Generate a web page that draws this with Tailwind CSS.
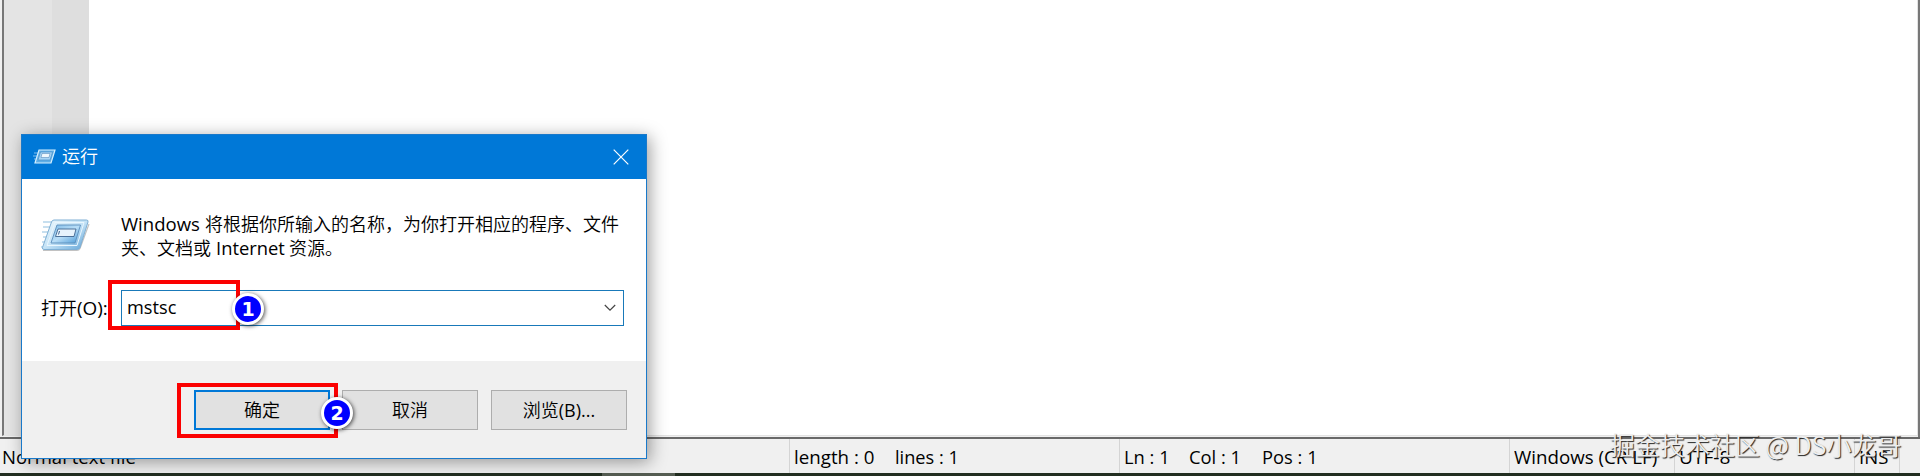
<!DOCTYPE html>
<html lang="zh-CN">
<head>
    <meta charset="UTF-8">
    <meta name="viewport" content="width=device-width, initial-scale=1.0">
    <title>运行</title>
    <script src="https://cdn.jsdelivr.net/npm/@tailwindcss/browser@4"></script>
</head>
<body class="relative w-[1920px] h-[476px] overflow-hidden bg-[#f0f0f0] text-black text-[18px] font-['Open_Sans','Noto_Sans_CJK_SC',sans-serif]">
    <!-- editor -->
    <div class="flex flex-col h-full">
        <div class="flex h-[439px] border-b-2 border-[#696969]">
            <div class="w-[2px] bg-[#f0f0f0]"></div>
            <div class="flex flex-1 border-l-2 border-b border-r border-l-[#777] border-b-[#e3e3e3] border-r-[#e3e3e3] mb-px">
                <div class="w-[48px] bg-[#e4e4e4]"></div>
                <div class="w-[37px] bg-[#dedede]"></div>
                <div class="flex-1 bg-white"></div>
            </div>
            <div class="w-[2px] bg-[#777]"></div>
        </div>
        <div class="flex h-[34px] leading-[37px] whitespace-pre">
            <div class="w-[790px] pl-[2px] border-r border-[#d4d4d4]"><span class="inline-block origin-left scale-x-[1.03]">Normal text file</span></div>
            <div class="flex w-[330px] pl-[4px] border-r border-[#d4d4d4]">
                <div class="w-[101px]"><span class="inline-block origin-left scale-x-[1.04]">length : 0</span></div>
                <div><span class="inline-block origin-left scale-x-[1.01]">lines : 1</span></div>
            </div>
            <div class="flex w-[390px] pl-[4px] border-r border-[#d4d4d4]">
                <div class="w-[65px]"><span class="inline-block origin-left scale-x-[1.02]">Ln : 1</span></div>
                <div class="w-[73px]"><span class="inline-block origin-left scale-x-[1.02]">Col : 1</span></div>
                <div><span class="inline-block origin-left scale-x-[1.02]">Pos : 1</span></div>
            </div>
            <div class="w-[165px] pl-[4px] border-r border-[#d4d4d4]"><span class="inline-block origin-left scale-x-[1.04]">Windows (CR LF)</span></div>
            <div class="w-[180px] pl-[4px] border-r border-[#d4d4d4]"><span class="inline-block origin-left scale-x-[1.06]">UTF-8</span></div>
            <div class="w-[45px] pl-[4px] border-r border-[#d4d4d4]"><span class="inline-block origin-left scale-x-[1.03]">INS</span></div>
        </div>
        <div class="flex h-[3px] bg-[#222e20]">
            <div class="ml-[602px] w-[73px] bg-[#555d52]"></div>
        </div>
    </div>

    <!-- run dialog -->
    <div class="absolute left-[21px] top-[134px] w-[626px] h-[325px] flex flex-col border border-[#1979ca] bg-white font-[350] shadow-[3px_3px_16px_rgba(0,0,0,0.38)]">
        <div class="flex items-center h-[44px] shrink-0 bg-[#0078d7] text-white">
            <svg class="ml-[11px] w-[24px] h-[16px]" viewBox="0 0 24 16" fill="none">
                <path d="M1 4h4M0 7h4M1 10h3" stroke="#9ed1f5" stroke-width=".8" />
                <path d="M6 1h16l-4 13H2z" fill="#5faee6" stroke="#d5efff" stroke-width="1.2" />
                <path d="M7.500 3h12l-2.400 8H5z" fill="#a8d5f5" stroke="#4a91c9" stroke-width=".7" />
                <path d="M9 4.500h8l-1 4H8z" fill="#eef7fd" stroke="#467fb2" stroke-width=".5" />
            </svg>
            <span class="ml-[5px] pb-[1px]">运行</span>
            <svg class="ml-auto mr-[17px] w-[16px] h-[16px]" viewBox="0 0 16 16" fill="none" stroke="#fff" stroke-width="1.2">
                <path d="M.7.7l14.600 14.600M15.300.7L.7 15.300" />
            </svg>
        </div>
        <div class="flex flex-col h-[182px] shrink-0">
            <div class="flex h-[111px]">
                <svg class="ml-[18px] mt-[40px] w-[50px] h-[33px]" viewBox="0 0 50 33" fill="none">
                    <defs>
                        <linearGradient id="frame" x1="0" y1="0" x2="1" y2="1">
                            <stop offset="0" stop-color="#eef8fd" />
                            <stop offset=".5" stop-color="#c3e2f6" />
                            <stop offset="1" stop-color="#5fa3d7" />
                        </linearGradient>
                        <linearGradient id="face" x1="0" y1="0" x2="1" y2="1">
                            <stop offset="0" stop-color="#7db9e6" />
                            <stop offset=".5" stop-color="#b9def7" />
                            <stop offset="1" stop-color="#4797d5" />
                        </linearGradient>
                    </defs>
                    <path d="M3 3h9M3 8h7M2 13h7M3 18h5M2 23h5M1 28h3" stroke="#b5d5ea" stroke-width="1.3" />
                    <path d="M3 31.500h34q2 0 3-2L49 5" stroke="#a8a8a8" stroke-width="1.2" opacity=".7" />
                    <path d="M14 1h32.500q2 0 1.500 2L40 28.500q-.6 2-3 2H4q-2 0-1.500-2L11.500 3q.7-2 2.500-2z" fill="url(#frame)" stroke="#7fafd4" />
                    <path d="M15 3.500h29L37 26.500H7z" stroke="#e9f6fe" />
                    <path d="M17 6h23.500l-5.500 18H11z" fill="url(#face)" stroke="#5c8fbc" stroke-width=".9" />
                    <path d="M18 10h18l-2 7.500H15.500z" fill="#e7f3fc" stroke="#40648f" stroke-width=".9" />
                    <path d="M19.500 12l-1 3.500" stroke="#40648f" />
                </svg>
                <div class="ml-[31px] mt-[33px] leading-[24px] whitespace-nowrap">
                    <div class="flex"><span class="w-[84px] font-normal"><span class="inline-block origin-left scale-x-[1.03]">Windows</span></span>将根据你所输入的名称，为你打开相应的程序、文件</div>
                    <div class="flex">夹、文档或<span class="w-[78px] pl-[5px] font-normal"><span class="inline-block origin-left scale-x-[1.02]">Internet</span></span>资源。</div>
                </div>
            </div>
            <div class="flex h-[36px] items-center">
                <label class="w-[80px] ml-[19px] whitespace-nowrap">打开<span class="inline-block origin-left scale-x-[1.05] font-normal">(O):</span></label>
                <div class="flex w-[503px] h-[36px] items-center border border-[#1979b9] pl-[5px] pr-[7px]">
                    <span class="inline-block origin-left scale-x-[1.01] pb-[2px] font-normal">mstsc</span>
                    <svg class="ml-auto w-[12px] h-[8px]" viewBox="0 0 12 8" fill="none" stroke="#444" stroke-width="1.2">
                        <path d="M.8 1L6 6.200 11.200 1" />
                    </svg>
                </div>
            </div>
        </div>
        <div class="flex flex-1 gap-[13px] bg-[#f0f0f0] pt-[29px] pl-[172px]">
            <div class="flex w-[136px] h-[40px] items-center justify-center border-2 border-[#0078d7] bg-[#e1e1e1] mr-[-1px]">确定</div>
            <div class="flex w-[136px] h-[40px] items-center justify-center border border-[#adadad] bg-[#e1e1e1]">取消</div>
            <div class="flex w-[136px] h-[40px] items-center justify-center border border-[#adadad] bg-[#e1e1e1]">浏览<span class="font-normal">(B)...</span></div>
        </div>
    </div>

    <!-- step marks -->
    <div class="absolute left-[108px] top-[280px] w-[132px] h-[50px] border-4 border-[#fb0000]"></div>
    <div class="absolute left-[177px] top-[383px] w-[161px] h-[55px] border-4 border-[#fb0000]"></div>
    <div class="absolute left-[232px] top-[293px] flex w-[32px] h-[32px] items-center justify-center rounded-full border-[3px] border-white bg-[#0000ff] text-white text-[19px] font-bold font-['DejaVu_Sans',sans-serif] shadow-[1px_1px_4px_rgba(0,0,0,0.7)]">1</div>
    <div class="absolute left-[321px] top-[397px] flex w-[32px] h-[32px] items-center justify-center rounded-full border-[3px] border-white bg-[#0000ff] text-white text-[19px] font-bold font-['DejaVu_Sans',sans-serif] shadow-[1px_1px_4px_rgba(0,0,0,0.7)]">2</div>

    <!-- watermark -->
    <div class="absolute left-[1610px] top-[426px] leading-[36px] whitespace-nowrap text-[25px] text-[#ededed] font-[350] font-['Noto_Sans_CJK_SC',sans-serif] [text-shadow:1px_1px_1px_#222]">掘金技术社区 @ DS小龙哥</div>
</body>
</html>
